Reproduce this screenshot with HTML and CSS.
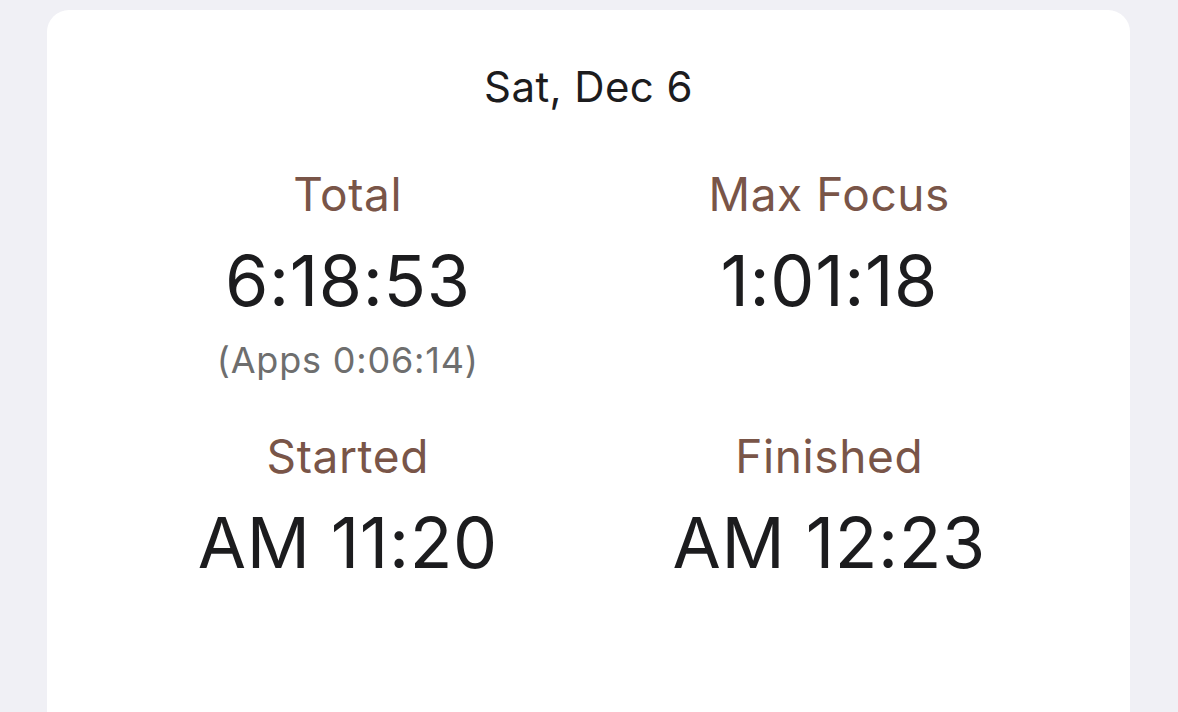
FILE: index.html
```html
<!DOCTYPE html>
<html lang="en">
	<head>
		<meta charset="UTF-8">
		<meta name="viewport" content="width=device-width, initial-scale=1.0">
		<title>Day Summary</title>
		<link rel="stylesheet" href="styles.css">
	</head>
	<body>
		<div class="card">
			<p class="date">Sat, Dec 6</p>
			<div class="stats">
				<div class="stat">
					<span class="label">Total</span>
					<span class="value">6:18:53</span>
					<span class="sub">(Apps 0:06:14)</span>
				</div>
				<div class="stat">
					<span class="label">Max Focus</span>
					<span class="value">1:01:18</span>
				</div>
				<div class="stat">
					<span class="label">Started</span>
					<span class="value">AM 11:20</span>
				</div>
				<div class="stat">
					<span class="label">Finished</span>
					<span class="value">AM 12:23</span>
				</div>
			</div>
		</div>
	</body>
</html>
```

FILE: styles.css
```css
* {
	box-sizing: border-box;
	font-family: Inter, "Noto Sans", sans-serif;
}
body {
	margin: 0;
	padding: 10px 48px 0 47px;
	background-color: #f0f0f5;
	overflow: hidden;
}
div.card {
	background-color: #ffffff;
	border-radius: 22px;
	min-height: 760px;
	padding: 52px 60px 0 60px;
}
p.date {
	margin: 0;
	text-align: center;
	font-size: 42px;
	line-height: 50px;
	letter-spacing: 0.4px;
	color: #1c1c1e;
}
div.stats {
	display: grid;
	grid-template-columns: 1fr 1fr;
	row-gap: 48px;
	margin-top: 55px;
}
div.stat {
	display: flex;
	flex-direction: column;
	align-items: center;
}
span.label {
	font-size: 46px;
	line-height: 54px;
	letter-spacing: 0.6px;
	color: #795548;
}
span.value {
	font-size: 70px;
	line-height: 80px;
	letter-spacing: 0.6px;
	margin-top: 20px;
	color: #1c1c1e;
}
span.sub {
	font-size: 36px;
	line-height: 42px;
	letter-spacing: 0.8px;
	margin-top: 18px;
	color: #6e6e6e;
}
```
